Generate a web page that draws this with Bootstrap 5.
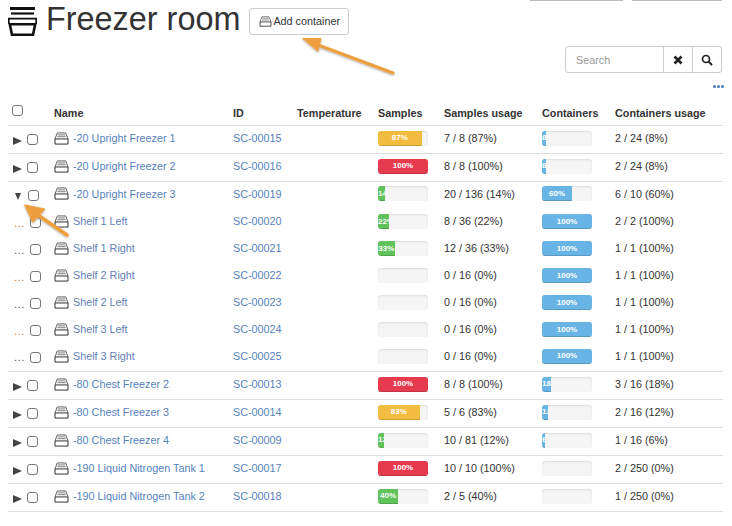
<!DOCTYPE html>
<html lang="en">
<head>
<meta charset="utf-8">
<title>Freezer room</title>
<link href="https://cdn.jsdelivr.net/npm/bootstrap@5.3.0/dist/css/bootstrap.min.css" rel="stylesheet">
<style>
html,body{height:526px;overflow:hidden}
body{position:relative;font-family:"Liberation Sans",Arial,sans-serif;font-size:10.8px;color:#333;padding:0 8px;background:#fff}
a{color:#5582bd;text-decoration:none}
a.seen{color:#6580b6}
.top-strip{height:1px;gap:9px;padding-right:2px}
.top-strip span{display:block;height:1px;background:#bbb}
.strip-a{width:93px}.strip-b{width:90px}
.title-row{height:45px;align-items:flex-start}
.title-row h1{font-family:"Liberation Sans",sans-serif;font-size:32.4px;font-weight:400;line-height:36px;margin:0 9px 0 9px;color:#333}
.big-icon{display:block;margin-top:6px;flex:none}
.add-btn{font-size:10.8px;line-height:14px;padding:5px 8px 6px 9px;height:27px;margin-top:7px;border:1px solid #ccc;border-radius:3px;color:#333;background:#fff;display:flex;align-items:center;gap:1px}
.search-row{height:27px;padding-right:2px}
.search-group{width:157px;height:27px}
.search-group .form-control{font-size:10.8px;height:27px;min-height:27px;padding:4px 10px;border-radius:3px 0 0 3px;border-color:#ccc;width:99px;flex:none}
.search-group .form-control::placeholder{color:#999}
.search-group .btn{height:27px;padding:0;border:1px solid #ccc;border-radius:0 3px 3px 0;background:#fff;color:#222;display:flex;align-items:center;justify-content:center}
.search-group .btn.clear-btn{width:31px;border-radius:0;margin-left:-1px}
.search-group .btn.find-btn{width:30px;margin-left:-1px}
.more-row{height:26px;padding-top:12px;justify-content:flex-end}
.more-row i{display:block;width:3px;height:3px;border-radius:50%;background:#4a7cbf;margin-left:1px}
.data-table{table-layout:fixed;width:715px;margin:0;border-collapse:collapse;font-size:10.8px;color:#333;--bs-table-color:#333}
.data-table th{font-weight:700;height:26px;padding:3px 0 0 0;vertical-align:middle;border:0;border-bottom:1px solid #ddd}
.data-table td{height:27px;padding:0 0 2px 0;vertical-align:middle;border:0;white-space:nowrap}
.data-table tr.edge td{height:28px;border-bottom:1px solid #ddd}
.data-table tr.lead-row td{height:28px;padding-bottom:3px}
.data-table tr.tail-row td{height:27px;padding-bottom:2px}
.data-table td.pick,.data-table tr.lead-row td.pick,.data-table tr.tail-row td.pick{padding:0}
.pick-box{display:flex;align-items:center;height:100%}
.form-check-input.tick{width:11px;height:11px;margin:0;border:1px solid #777;border-radius:3px;flex:none}
.tri-r,.tri-d,.dots{display:block;flex:none}
.tri-r{width:0;height:0;border-left:9px solid #444;border-top:4px solid transparent;border-bottom:4px solid transparent;margin:4px 5px 0 5px}
.tri-d{width:0;height:0;border-top:7px solid #444;border-left:3.5px solid transparent;border-right:3.5px solid transparent;margin:3px 7px 0 7px}
.dots{width:10px;margin:0 6px;font-size:11px;line-height:10px;color:#555;text-align:center;letter-spacing:.6px}
.dots.warm{color:#c8772a}
.tree-name{display:flex;align-items:center;gap:4px}
.tree-name svg{flex:none}
.meter.progress{width:50px;height:15px;background:#f5f5f5;border-radius:3px;box-shadow:inset 0 1px 2px rgba(0,0,0,.1);font-size:8px;--bs-progress-font-size:8px}
.meter .progress-bar{font-weight:700;color:#fff;box-shadow:inset 0 -1px 0 rgba(0,0,0,.15);white-space:nowrap}
.fill-warn{background:#f2bc41}.fill-bad{background:#e63b4f}.fill-good{background:#60c25a}.fill-info{background:#68b5e5}
.callouts{position:absolute;left:0;top:0;pointer-events:none}
</style>
</head>
<body>
<svg width="0" height="0" class="position-absolute">
<defs>
<symbol id="box" viewBox="0 0 16 14">
<path d="M1 13V7.500h14V13z" fill="#fff" stroke="#222"/>
<path d="M1 7.500 3.500 1h9L15 7.500" fill="none" stroke="#555"/>
<path d="M4 3h8M3.500 5h9" stroke="#999" stroke-width="1.300"/>
</symbol>
</defs>
</svg>

<div class="top-strip d-flex justify-content-end"><span class="strip-a"></span><span class="strip-b"></span></div>

<div class="title-row d-flex">
<svg class="big-icon" width="29" height="29" viewBox="0 0 29 29" aria-hidden="true">
<path d="M2 1.500h25" stroke="#111" stroke-width="3"/>
<path d="M3 6.500h23" stroke="#111" stroke-width="2.200"/>
<path d="M.8 17V11.700h27.400V17" fill="none" stroke="#111" stroke-width="1.800"/>
<path d="M1.800 17.200h25.400L25 27.800H4z" fill="none" stroke="#111" stroke-width="2.600"/>
</svg>
<h1>Freezer room</h1>
<a href="#" class="add-btn"><svg width="13" height="11" aria-hidden="true"><use href="#box"/></svg>Add container</a>
</div>

<div class="search-row d-flex justify-content-end">
<div class="input-group search-group flex-nowrap">
<input class="form-control" type="text" placeholder="Search" aria-label="Search">
<button class="btn clear-btn" type="button" aria-label="Clear"><svg width="10" height="10" viewBox="0 0 10 10"><path d="M1.500 1.500l7 7M8.500 1.500l-7 7" stroke="#222" stroke-width="2.600"/></svg></button>
<button class="btn find-btn" type="button" aria-label="Search"><svg width="12" height="12" viewBox="0 0 12 12"><circle cx="5" cy="5" r="3.500" fill="none" stroke="#222" stroke-width="1.700"/><path d="M7.600 7.600 11 11" stroke="#222" stroke-width="2"/></svg></button>
</div>
</div>

<div class="more-row d-flex"><i></i><i></i><i></i></div>

<table class="table data-table">
<colgroup><col style="width:46px"><col style="width:179px"><col style="width:64px"><col style="width:81px"><col style="width:66px"><col style="width:98px"><col style="width:73px"><col style="width:108px"></colgroup>
<thead><tr>
<th class="ps-1"><input class="form-check-input tick" type="checkbox" aria-label="Select all"></th>
<th>Name</th><th>ID</th><th>Temperature</th><th>Samples</th><th>Samples usage</th><th>Containers</th><th>Containers usage</th>
</tr></thead>
<tbody>
<tr class="edge"><td class="pick"><div class="pick-box"><span class="tri-r"></span><input class="form-check-input tick" type="checkbox" aria-label="Select"></div></td><td><div class="tree-name"><svg width="15" height="13"><use href="#box"/></svg><a href="#">-20 Upright Freezer 1</a></div></td><td><a href="#">SC-00015</a></td><td></td><td><div class="progress meter"><div class="progress-bar fill-warn" style="width:87%">87%</div></div></td><td>7 / 8 (87%)</td><td><div class="progress meter"><div class="progress-bar fill-info" style="width:8%">8%</div></div></td><td>2 / 24 (8%)</td></tr>
<tr class="edge"><td class="pick"><div class="pick-box"><span class="tri-r"></span><input class="form-check-input tick" type="checkbox" aria-label="Select"></div></td><td><div class="tree-name"><svg width="15" height="13"><use href="#box"/></svg><a href="#">-20 Upright Freezer 2</a></div></td><td><a href="#">SC-00016</a></td><td></td><td><div class="progress meter"><div class="progress-bar fill-bad" style="width:100%">100%</div></div></td><td>8 / 8 (100%)</td><td><div class="progress meter"><div class="progress-bar fill-info" style="width:8%">8%</div></div></td><td>2 / 24 (8%)</td></tr>
<tr class="lead-row"><td class="pick"><div class="pick-box"><span class="tri-d"></span><input class="form-check-input tick" type="checkbox" aria-label="Select"></div></td><td><div class="tree-name"><svg width="15" height="13"><use href="#box"/></svg><a href="#">-20 Upright Freezer 3</a></div></td><td><a href="#">SC-00019</a></td><td></td><td><div class="progress meter"><div class="progress-bar fill-good" style="width:14%">14%</div></div></td><td>20 / 136 (14%)</td><td><div class="progress meter"><div class="progress-bar fill-info" style="width:60%">60%</div></div></td><td>6 / 10 (60%)</td></tr>
<tr><td class="pick"><div class="pick-box"><span class="dots warm">...</span><input class="form-check-input tick" type="checkbox" aria-label="Select"></div></td><td><div class="tree-name"><svg width="15" height="13"><use href="#box"/></svg><a href="#" class="seen">Shelf 1 Left</a></div></td><td><a href="#">SC-00020</a></td><td></td><td><div class="progress meter"><div class="progress-bar fill-good" style="width:22%">22%</div></div></td><td>8 / 36 (22%)</td><td><div class="progress meter"><div class="progress-bar fill-info" style="width:100%">100%</div></div></td><td>2 / 2 (100%)</td></tr>
<tr><td class="pick"><div class="pick-box"><span class="dots">...</span><input class="form-check-input tick" type="checkbox" aria-label="Select"></div></td><td><div class="tree-name"><svg width="15" height="13"><use href="#box"/></svg><a href="#" class="seen">Shelf 1 Right</a></div></td><td><a href="#">SC-00021</a></td><td></td><td><div class="progress meter"><div class="progress-bar fill-good" style="width:33%">33%</div></div></td><td>12 / 36 (33%)</td><td><div class="progress meter"><div class="progress-bar fill-info" style="width:100%">100%</div></div></td><td>1 / 1 (100%)</td></tr>
<tr><td class="pick"><div class="pick-box"><span class="dots warm">...</span><input class="form-check-input tick" type="checkbox" aria-label="Select"></div></td><td><div class="tree-name"><svg width="15" height="13"><use href="#box"/></svg><a href="#" class="seen">Shelf 2 Right</a></div></td><td><a href="#">SC-00022</a></td><td></td><td><div class="progress meter"></div></td><td>0 / 16 (0%)</td><td><div class="progress meter"><div class="progress-bar fill-info" style="width:100%">100%</div></div></td><td>1 / 1 (100%)</td></tr>
<tr><td class="pick"><div class="pick-box"><span class="dots">...</span><input class="form-check-input tick" type="checkbox" aria-label="Select"></div></td><td><div class="tree-name"><svg width="15" height="13"><use href="#box"/></svg><a href="#" class="seen">Shelf 2 Left</a></div></td><td><a href="#">SC-00023</a></td><td></td><td><div class="progress meter"></div></td><td>0 / 16 (0%)</td><td><div class="progress meter"><div class="progress-bar fill-info" style="width:100%">100%</div></div></td><td>1 / 1 (100%)</td></tr>
<tr><td class="pick"><div class="pick-box"><span class="dots warm">...</span><input class="form-check-input tick" type="checkbox" aria-label="Select"></div></td><td><div class="tree-name"><svg width="15" height="13"><use href="#box"/></svg><a href="#" class="seen">Shelf 3 Left</a></div></td><td><a href="#">SC-00024</a></td><td></td><td><div class="progress meter"></div></td><td>0 / 16 (0%)</td><td><div class="progress meter"><div class="progress-bar fill-info" style="width:100%">100%</div></div></td><td>1 / 1 (100%)</td></tr>
<tr class="edge tail-row"><td class="pick"><div class="pick-box"><span class="dots">...</span><input class="form-check-input tick" type="checkbox" aria-label="Select"></div></td><td><div class="tree-name"><svg width="15" height="13"><use href="#box"/></svg><a href="#" class="seen">Shelf 3 Right</a></div></td><td><a href="#">SC-00025</a></td><td></td><td><div class="progress meter"></div></td><td>0 / 16 (0%)</td><td><div class="progress meter"><div class="progress-bar fill-info" style="width:100%">100%</div></div></td><td>1 / 1 (100%)</td></tr>
<tr class="edge"><td class="pick"><div class="pick-box"><span class="tri-r"></span><input class="form-check-input tick" type="checkbox" aria-label="Select"></div></td><td><div class="tree-name"><svg width="15" height="13"><use href="#box"/></svg><a href="#">-80 Chest Freezer 2</a></div></td><td><a href="#">SC-00013</a></td><td></td><td><div class="progress meter"><div class="progress-bar fill-bad" style="width:100%">100%</div></div></td><td>8 / 8 (100%)</td><td><div class="progress meter"><div class="progress-bar fill-info" style="width:18%">18%</div></div></td><td>3 / 16 (18%)</td></tr>
<tr class="edge"><td class="pick"><div class="pick-box"><span class="tri-r"></span><input class="form-check-input tick" type="checkbox" aria-label="Select"></div></td><td><div class="tree-name"><svg width="15" height="13"><use href="#box"/></svg><a href="#">-80 Chest Freezer 3</a></div></td><td><a href="#">SC-00014</a></td><td></td><td><div class="progress meter"><div class="progress-bar fill-warn" style="width:83%">83%</div></div></td><td>5 / 6 (83%)</td><td><div class="progress meter"><div class="progress-bar fill-info" style="width:12%">12%</div></div></td><td>2 / 16 (12%)</td></tr>
<tr class="edge"><td class="pick"><div class="pick-box"><span class="tri-r"></span><input class="form-check-input tick" type="checkbox" aria-label="Select"></div></td><td><div class="tree-name"><svg width="15" height="13"><use href="#box"/></svg><a href="#">-80 Chest Freezer 4</a></div></td><td><a href="#">SC-00009</a></td><td></td><td><div class="progress meter"><div class="progress-bar fill-good" style="width:12%">12%</div></div></td><td>10 / 81 (12%)</td><td><div class="progress meter"><div class="progress-bar fill-info" style="width:6%">6%</div></div></td><td>1 / 16 (6%)</td></tr>
<tr class="edge"><td class="pick"><div class="pick-box"><span class="tri-r"></span><input class="form-check-input tick" type="checkbox" aria-label="Select"></div></td><td><div class="tree-name"><svg width="15" height="13"><use href="#box"/></svg><a href="#">-190 Liquid Nitrogen Tank 1</a></div></td><td><a href="#">SC-00017</a></td><td></td><td><div class="progress meter"><div class="progress-bar fill-bad" style="width:100%">100%</div></div></td><td>10 / 10 (100%)</td><td><div class="progress meter"></div></td><td>2 / 250 (0%)</td></tr>
<tr class="edge"><td class="pick"><div class="pick-box"><span class="tri-r"></span><input class="form-check-input tick" type="checkbox" aria-label="Select"></div></td><td><div class="tree-name"><svg width="15" height="13"><use href="#box"/></svg><a href="#">-190 Liquid Nitrogen Tank 2</a></div></td><td><a href="#">SC-00018</a></td><td></td><td><div class="progress meter"><div class="progress-bar fill-good" style="width:40%">40%</div></div></td><td>2 / 5 (40%)</td><td><div class="progress meter"></div></td><td>1 / 250 (0%)</td></tr>
</tbody>
</table>

<svg class="callouts" width="732" height="526" aria-hidden="true">
<defs><filter id="soft" x="-20%" y="-20%" width="140%" height="140%"><feDropShadow dx="0" dy="1" stdDeviation="1" flood-color="#000" flood-opacity=".35"/></filter></defs>
<g filter="url(#soft)" fill="#ee9f3e" stroke="#ee9f3e" stroke-linecap="round" stroke-linejoin="round">
<path d="M393 73 318 45" fill="none" stroke-width="3"/>
<path d="M303 38.500 321 38.500 318 51z" stroke-width="1"/>
<path d="M67 235 35 213" fill="none" stroke-width="3.500"/>
<path d="M25 205 45 209 33 222z" stroke-width="1"/>
</g>
</svg>
<script src="https://cdn.jsdelivr.net/npm/bootstrap@5.3.0/dist/js/bootstrap.bundle.min.js"></script>
</body>
</html>
